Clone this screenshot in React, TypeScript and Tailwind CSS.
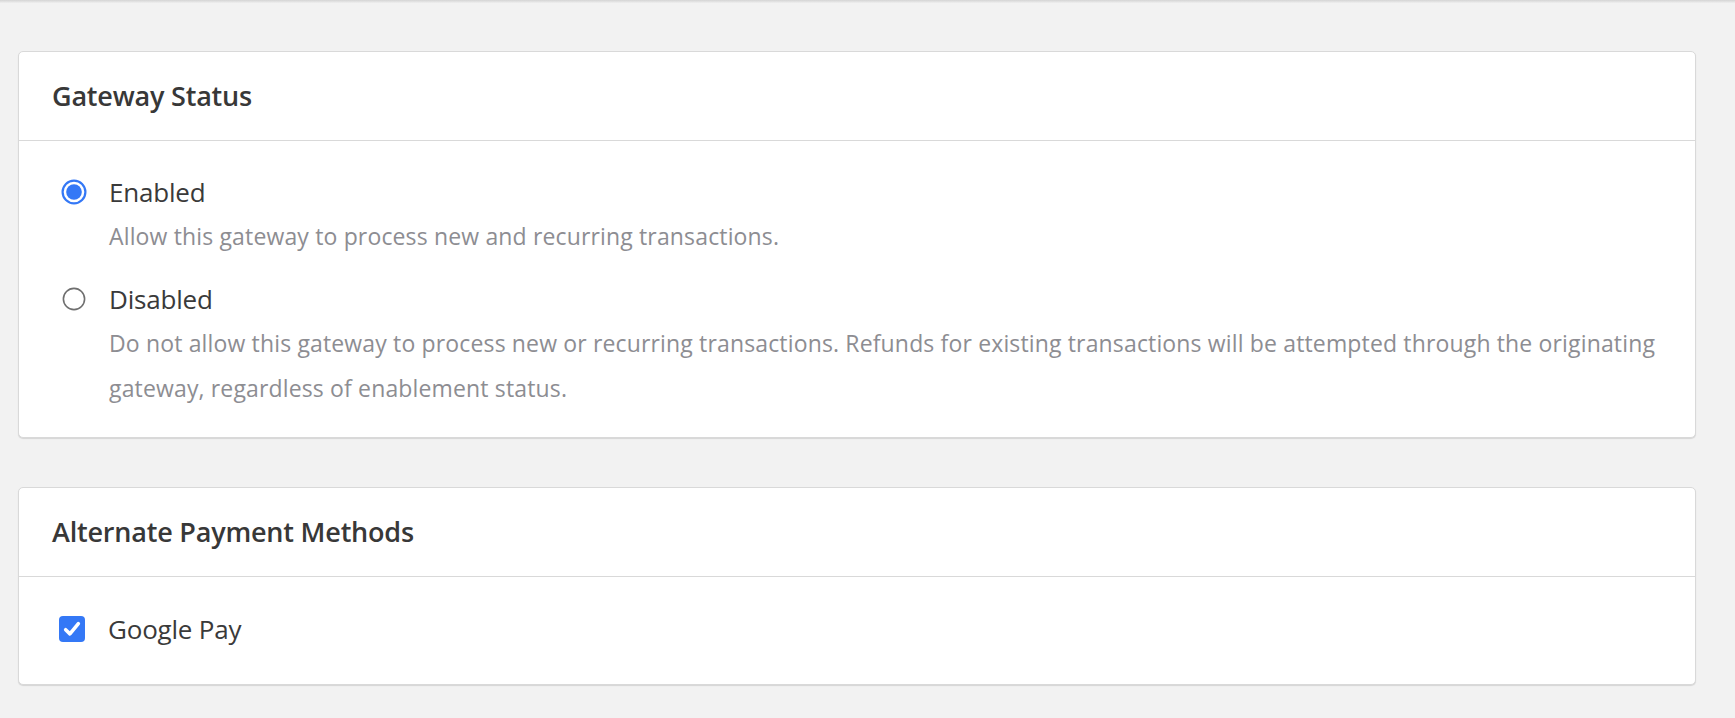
import { useState } from "react";

function Radio({ checked }: { checked: boolean }) {
  if (checked) {
    return (
      <svg width="26" height="26" viewBox="0 0 26 26" className="flex-shrink-0">
        <circle cx="13" cy="13" r="11.4" fill="white" stroke="#3478f6" strokeWidth="2.2" />
        <circle cx="13" cy="13" r="7.8" fill="#3478f6" />
      </svg>
    );
  }
  return (
    <svg width="26" height="26" viewBox="0 0 26 26" className="flex-shrink-0">
      <circle cx="13" cy="13" r="10.6" fill="white" stroke="#6f6f6f" strokeWidth="1.6" />
    </svg>
  );
}

function Checkbox() {
  return (
    <div className="w-[26px] h-[26px] rounded-[4px] bg-[#3478f6] flex items-center justify-center flex-shrink-0">
      <svg width="22" height="22" viewBox="0 0 18 18">
        <path d="M3.8 9.6 L7.3 13 L14.2 4.6" fill="none" stroke="white" strokeWidth="2.9" strokeLinecap="round" strokeLinejoin="round" />
      </svg>
    </div>
  );
}

function Card({ title, children }: { title: string; children: React.ReactNode }) {
  return (
    <div className="bg-white border border-[#d9d9d9] rounded-[5px] shadow-[0_1px_1px_rgba(0,0,0,0.12)]">
      <div className="h-[89px] flex items-center px-[33px] border-b border-[#d9d9d9]">
        <h2 className="text-[27px] font-semibold text-[#383838] tracking-[-0.2px]">{title}</h2>
      </div>
      {children}
    </div>
  );
}

export default function App() {
  const [status] = useState("enabled");

  return (
    <div className="min-h-screen bg-[#f2f2f2] font-['Open_Sans',sans-serif]">
      <div className="h-[3px] bg-gradient-to-b from-[#d4d4d4] to-[#efefef]" />
      <div className="pl-[18px] pr-[39px] pt-[48px] flex flex-col gap-[49px]">
        <Card title="Gateway Status">
          <div className="pl-[42px] pr-[20px] pt-[31px] pb-[26px] flex flex-col gap-[20px]">
            <div>
              <div className="flex items-center gap-[22px] h-[40px]">
                <Radio checked={status === "enabled"} />
                <span className="text-[26px] text-[#3a3a3a] tracking-[-0.2px]">Enabled</span>
              </div>
              <p className="pl-[48px] mt-[2px] text-[23px] leading-[45px] text-[#8d8d92] tracking-[0.15px]">
                Allow this gateway to process new and recurring transactions.
              </p>
            </div>
            <div>
              <div className="flex items-center gap-[22px] h-[40px]">
                <Radio checked={status === "disabled"} />
                <span className="text-[26px] text-[#3a3a3a] tracking-[-0.2px]">Disabled</span>
              </div>
              <p className="pl-[48px] mt-[2px] text-[23px] leading-[45px] text-[#8d8d92] tracking-[0.15px]">
                Do not allow this gateway to process new or recurring transactions. Refunds for existing
                transactions will be attempted through the originating gateway, regardless of enablement
                status.
              </p>
            </div>
          </div>
        </Card>

        <Card title="Alternate Payment Methods">
          <div className="pl-[40px] pt-[32px] pb-[35px]">
            <label className="flex items-center gap-[23px] h-[40px]">
              <Checkbox />
              <span className="text-[26px] text-[#3a3a3a] tracking-[-0.2px]">Google Pay</span>
            </label>
          </div>
        </Card>
      </div>
    </div>
  );
}
